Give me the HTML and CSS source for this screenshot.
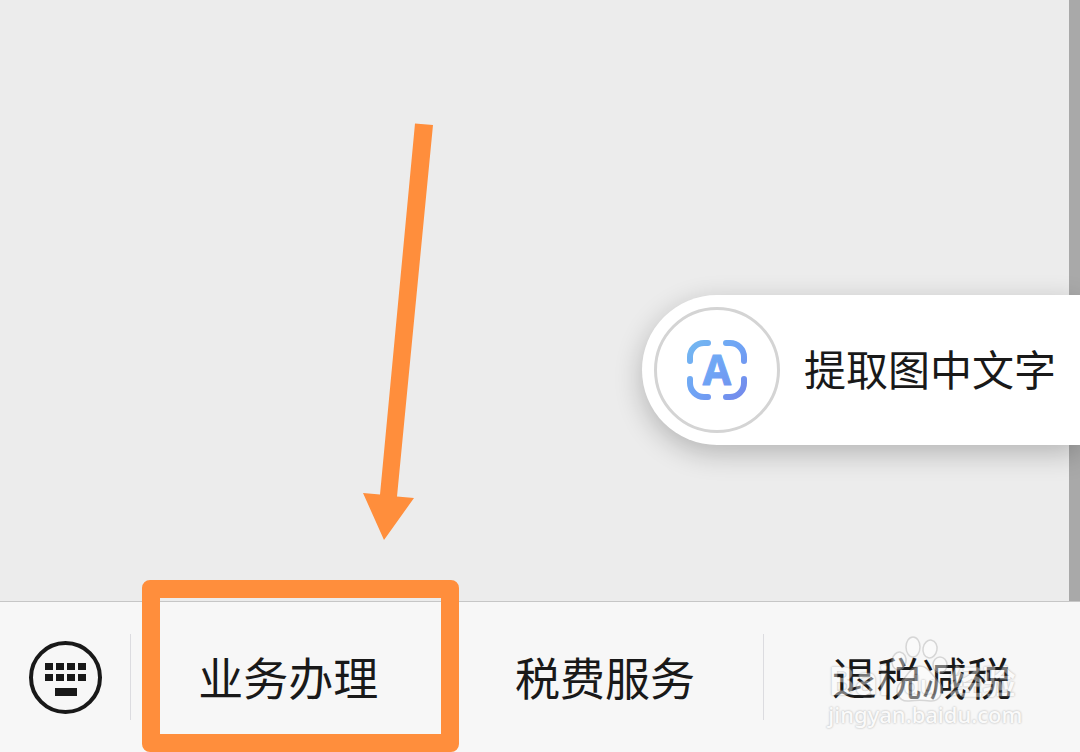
FILE: index.html
```html
<!DOCTYPE html>
<html lang="zh-CN">
    <head>
        <meta charset="utf-8">
        <title>业务办理</title>
        <meta name="viewport" content="width=device-width, initial-scale=1.0">
        <link rel="stylesheet" href="styles.css">
    </head>
    <body>

        <main class="chat">
            <svg class="arrow" viewBox="0 0 72 418" aria-hidden="true">
                <path d="M53 0.500L71 2L35 373.500L52 375L22 417L1 370L18 371.500Z" fill="#ff8e3c"/>
            </svg>

            <button class="extract" type="button">
                <span class="extract-icon">
                    <svg viewBox="0 0 60 60" aria-hidden="true">
                        <defs>
                            <linearGradient id="blue" gradientUnits="userSpaceOnUse" x1="0" y1="0" x2="60" y2="60">
                                <stop offset="0" stop-color="#74b9f0"/>
                                <stop offset=".5" stop-color="#6fa3f5"/>
                                <stop offset="1" stop-color="#7487ea"/>
                            </linearGradient>
                        </defs>
                        <path fill="none" stroke="url(#blue)" stroke-linecap="round" stroke-width="6" d="M3 21V17A14 14 0 0 1 17 3H21M39 3H43A14 14 0 0 1 57 17V21M57 39V43A14 14 0 0 1 43 57H39M21 57H17A14 14 0 0 1 3 43V39"/>
                        <text class="letter" x="30" y="45" text-anchor="middle">A</text>
                    </svg>
                </span>
                <span class="extract-label">提取图中文字</span>
            </button>
        </main>

        <nav class="menu">
            <button class="keyboard" type="button" aria-label="键盘">
                <svg viewBox="0 0 74 74" aria-hidden="true">
                    <circle cx="37.500" cy="37.500" r="34.500" fill="none" stroke="#191919" stroke-width="4"/>
                    <path fill="#191919" d="M17 23h8v7h-8zM28 23h8v7h-8zM39 23h8v7h-8zM50 23h8v7h-8zM17 34h8v7h-8zM28 34h8v7h-8zM39 34h8v7h-8zM50 34h8v7h-8zM27 48h22v8h-22z"/>
                </svg>
            </button>
            <button class="item marked" type="button">业务办理</button>
            <button class="item" type="button">税费服务</button>
            <div class="cell">
                <button class="item" type="button">退税减税</button>
                <div class="watermark">
                    <div class="brand">
                        <span>Bai</span>
                        <svg class="paw" viewBox="0 0 60 68" aria-hidden="true">
                            <g fill="#fff" stroke="#aaa" stroke-width="1.500">
                                <path d="M31 30C39 30 42 38 49 45C57 52 52 66 41 65C34 64 28 64 20 65C9 66 4 54 12 46C19 39 22 30 31 30Z"/>
                                <ellipse cx="10" cy="25" rx="7" ry="9" transform="rotate(10 10 25)"/>
                                <ellipse cx="24" cy="11" rx="7" ry="10"/>
                                <ellipse cx="41" cy="13" rx="7" ry="9" transform="rotate(10 41 13)"/>
                                <ellipse cx="51" cy="29" rx="7" ry="8"/>
                            </g>
                            <text x="31" y="58" text-anchor="middle">du</text>
                        </svg>
                        <span class="name">经验</span>
                    </div>
                    <div class="site">jingyan.baidu.com</div>
                </div>
            </div>
        </nav>

    </body>
</html>
```
FILE: styles.css
```css
* {
    box-sizing: border-box;
    margin: 0;
}

body {
    display: flex;
    flex-direction: column;
    min-height: 100vh;
    background: #ececec;
    color: #191919;
    font-family: "Noto Sans CJK SC", sans-serif;
}

button {
    padding: 0;
    border: none;
    background: none;
    color: inherit;
    font: inherit;
}

svg {
    display: block;
}

.chat {
    position: relative;
    display: flex;
    flex: 1;
    align-items: flex-end;
    justify-content: flex-end;
    padding-bottom: 156px;
    overflow: hidden;
    background: linear-gradient(#a9a9a9, #a9a9a9) right / 11px 100% no-repeat;
}

/* drawn over the conversation, pointing at the first menu item */
.arrow {
    position: absolute;
    left: 362px;
    bottom: 60px;
    width: 72px;
    height: 418px;
}

.extract {
    display: flex;
    align-items: center;
    gap: 24px;
    height: 150px;
    padding: 0 24px 0 12px;
    border-radius: 75px 0 0 75px;
    background: #fff;
    box-shadow: 0 8px 28px rgba(0, 0, 0, .24);
    font-size: 42px;
    line-height: 60px;
}

.extract-label {
    padding-bottom: 4px;
}

.extract-icon {
    display: grid;
    place-items: center;
    width: 126px;
    height: 126px;
    border: 3px solid #d4d4d4;
    border-radius: 50%;
}

.extract-icon svg {
    width: 60px;
    height: 60px;
}

.letter {
    fill: url(#blue);
    stroke: url(#blue);
    stroke-width: 1px;
    stroke-linejoin: round;
    font-family: "Open Sans", sans-serif;
    font-size: 41px;
    font-weight: 700;
}

.menu {
    display: flex;
    height: 151px;
    border-top: 1px solid #c6c6c6;
    background: #f7f7f7;
}

.keyboard {
    display: grid;
    place-items: center;
    width: 130px;
}

.keyboard svg {
    width: 74px;
    height: 74px;
}

.item, .cell {
    position: relative;
    flex: 1;
}

.item {
    background: linear-gradient(#dcdce0, #dcdce0) left / 1px 86px no-repeat;
    font-size: 45px;
    line-height: 60px;
}

.cell .item {
    width: 100%;
    height: 100%;
}

.marked::after {
    content: "";
    position: absolute;
    top: -22px;
    right: -12px;
    bottom: 0;
    left: 12px;
    z-index: 1;
    border: 18px solid #ff8e3c;
    border-radius: 8px;
}

.watermark {
    position: absolute;
    top: 34px;
    left: 65px;
    color: #fff;
    font-family: "Noto Sans", "Noto Sans CJK SC", sans-serif;
    font-weight: 600;
    text-shadow: 0 0 2px #888, 0 0 2px #888;
    opacity: .42;
    pointer-events: none;
}

.brand {
    display: flex;
    align-items: flex-end;
    height: 68px;
    font-size: 40px;
    line-height: 48px;
}

.paw {
    width: 60px;
    height: 68px;
    overflow: visible;
}

.paw text {
    fill: #fff;
    font-size: 26px;
}

.name {
    font-size: 33px;
    line-height: 44px;
}

.site {
    font-size: 22px;
    font-weight: 500;
    line-height: 20px;
}
```
